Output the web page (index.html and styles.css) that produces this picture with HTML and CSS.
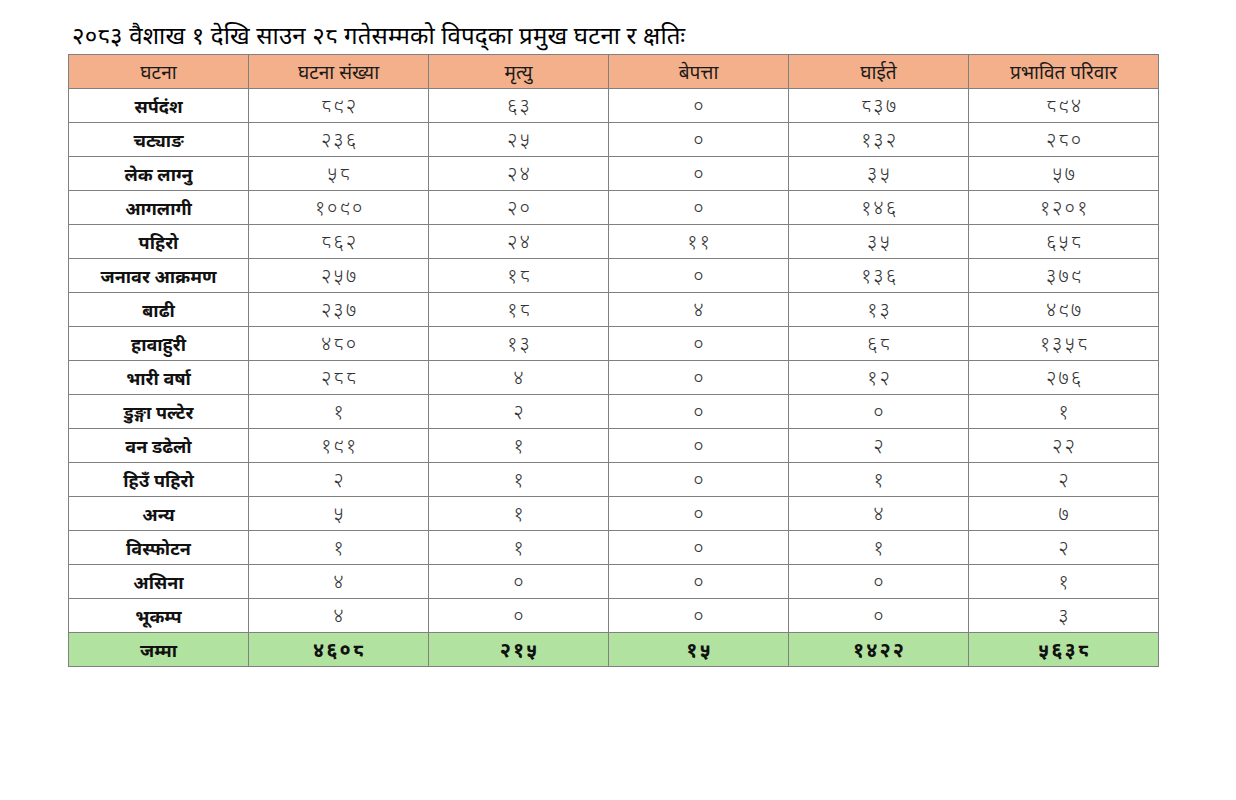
FILE: index.html
```html
<!DOCTYPE html>
<html lang="ne">
<head>
<meta charset="utf-8">
<title>विपद्का प्रमुख घटना</title>
<link rel="stylesheet" href="styles.css">
</head>
<body>
<div class="page">
  <h1 class="title">२०८३ वैशाख १ देखि साउन २८ गतेसम्मको विपद्का प्रमुख घटना र क्षतिः</h1>
  <table class="grid">
    <colgroup>
      <col class="c1"><col class="c2"><col class="c3"><col class="c4"><col class="c5"><col class="c6">
    </colgroup>
    <thead>
      <tr class="head"><th>घटना</th><th>घटना संख्या</th><th>मृत्यु</th><th>बेपत्ता</th><th>घाईते</th><th>प्रभावित परिवार</th></tr>
    </thead>
    <tbody>
      <tr><th>सर्पदंश</th><td>८९२</td><td>६३</td><td>०</td><td>८३७</td><td>८९४</td></tr>
      <tr><th>चट्याङ</th><td>२३६</td><td>२५</td><td>०</td><td>१३२</td><td>२८०</td></tr>
      <tr><th>लेक लाग्नु</th><td>५८</td><td>२४</td><td>०</td><td>३५</td><td>५७</td></tr>
      <tr><th>आगलागी</th><td>१०९०</td><td>२०</td><td>०</td><td>१४६</td><td>१२०१</td></tr>
      <tr><th>पहिरो</th><td>८६२</td><td>२४</td><td>११</td><td>३५</td><td>६५८</td></tr>
      <tr><th>जनावर आक्रमण</th><td>२५७</td><td>१८</td><td>०</td><td>१३६</td><td>३७९</td></tr>
      <tr><th>बाढी</th><td>२३७</td><td>१८</td><td>४</td><td>१३</td><td>४९७</td></tr>
      <tr><th>हावाहुरी</th><td>४८०</td><td>१३</td><td>०</td><td>६८</td><td>१३५८</td></tr>
      <tr><th>भारी वर्षा</th><td>२८८</td><td>४</td><td>०</td><td>१२</td><td>२७६</td></tr>
      <tr><th>डुङ्गा पल्टेर</th><td>१</td><td>२</td><td>०</td><td>०</td><td>१</td></tr>
      <tr><th>वन डढेलो</th><td>१९१</td><td>१</td><td>०</td><td>२</td><td>२२</td></tr>
      <tr><th>हिउँ पहिरो</th><td>२</td><td>१</td><td>०</td><td>१</td><td>२</td></tr>
      <tr><th>अन्य</th><td>५</td><td>१</td><td>०</td><td>४</td><td>७</td></tr>
      <tr><th>विस्फोटन</th><td>१</td><td>१</td><td>०</td><td>१</td><td>२</td></tr>
      <tr><th>असिना</th><td>४</td><td>०</td><td>०</td><td>०</td><td>१</td></tr>
      <tr><th>भूकम्प</th><td>४</td><td>०</td><td>०</td><td>०</td><td>३</td></tr>
    </tbody>
    <tfoot>
      <tr class="total"><th>जम्मा</th><td>४६०८</td><td>२१५</td><td>१५</td><td>१४२२</td><td>५६३८</td></tr>
    </tfoot>
  </table>
</div>
</body>
</html>
```
FILE: styles.css
```css
html, body {
  margin: 0;
  padding: 0;
  background: #ffffff;
}
body {
  font-family: "Noto Sans", "Noto Sans Devanagari", "DejaVu Sans", sans-serif;
  color: #111;
}
.page {
  padding: 19px 0 0 68px;
}
.title {
  margin: 0 0 4px 4px;
  font-size: 24px;
  font-weight: 400;
  line-height: 31px;
  color: #000;
  letter-spacing: 0.2px;
}
.grid {
  border-collapse: collapse;
  border: 1.5px solid #555;
  table-layout: fixed;
  width: 1091px;
}
.c1, .c2, .c3, .c4, .c5 { width: 180px; }
.c6 { width: 190px; }
.grid th, .grid td {
  border: 1px solid #808080;
  height: 33px;
  padding: 0;
  text-align: center;
  vertical-align: middle;
  font-size: 18px;
  line-height: 20px;
}
.grid th {
  font-weight: 700;
  color: #111;
}
.grid td {
  font-size: 20px;
  font-weight: 300;
  letter-spacing: 2px;
  text-indent: 2px;
  color: #333;
}
.head th {
  background: #f4b08a;
  font-weight: 400;
  font-size: 19px;
  color: #1a1a1a;
}
.total th, .total td {
  background: #b2e2a0;
  font-weight: 700;
  color: #111;
}
```
